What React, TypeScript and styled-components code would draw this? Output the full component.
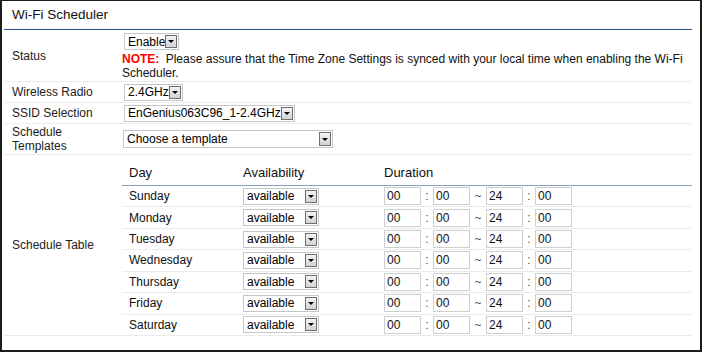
import React from "react";
import styled, { createGlobalStyle } from "styled-components";

const Global = createGlobalStyle`
  html, body { margin: 0; padding: 0; background: #fff; }
  body { font-family: "Liberation Sans", Arial, sans-serif; }
`;

const Frame = styled.div`
  width: 702px;
  height: 352px;
  box-sizing: border-box;
  border-style: solid;
  border-color: #1c1c1c;
  border-width: 1px 2px 2px 2px;
  padding: 0 8px 0 2px;
  background: #fff;
`;

const Title = styled.div`
  height: 28px;
  line-height: 28px;
  padding-left: 8px;
  font-size: 13.5px;
  color: #111;
  border-bottom: 1px solid #2b4a8b;
`;

const FormRow = styled.div<{ $h: number }>`
  display: grid;
  grid-template-columns: 118px 1fr;
  height: ${(p) => p.$h}px;
  border-bottom: 1px solid #ebebeb;
`;

const Label = styled.div`
  display: flex;
  align-items: center;
  padding: 0 8px;
  font-size: 12px;
  line-height: 14px;
  color: #222;
`;

const Value = styled.div<{ $top?: boolean }>`
  display: flex;
  flex-direction: column;
  justify-content: ${(p) => (p.$top ? "flex-start" : "center")};
  align-items: flex-start;
  padding-top: ${(p) => (p.$top ? 3 : 0)}px;
`;

const TableValue = styled.div`
  display: flex;
`;

const SelectBox = styled.div<{ $w?: number; $h?: number; $ml?: number }>`
  display: flex;
  align-items: center;
  width: ${(p) => (p.$w ? `${p.$w}px` : "auto")};
  height: ${(p) => p.$h ?? 17}px;
  margin-left: ${(p) => p.$ml ?? 2}px;
  box-sizing: border-box;
  border: 1px solid #c6c6c6;
  background: #fff;
  font-size: 12px;
  color: #000;
  padding-left: 3px;
`;

const SelectText = styled.span<{ $fill: boolean }>`
  flex: ${(p) => (p.$fill ? "1" : "none")};
  white-space: nowrap;
  overflow: hidden;
`;

const Arrow = styled.span`
  width: 12px;
  height: calc(100% - 2px);
  box-sizing: border-box;
  border: 1px solid #6e6e6e;
  background: linear-gradient(#f4f4f4, #d2d2d2);
  display: flex;
  align-items: center;
  justify-content: center;
  margin-right: 1px;
  &::after {
    content: "";
    border-left: 3px solid transparent;
    border-right: 3px solid transparent;
    border-top: 3px solid #000;
  }
`;

const Note = styled.div`
  font-size: 12px;
  line-height: 14px;
  color: #111;
  margin-top: 2px;
`;

const NoteTag = styled.b`
  color: #f00;
  margin-right: 3px;
`;

const Table = styled.div`
  display: flex;
  flex-direction: column;
  width: 100%;
  height: 180px;
`;

const HeaderRow = styled.div`
  display: grid;
  grid-template-columns: 114px 141px 1fr;
  height: 31px;
  flex: none;
  box-sizing: border-box;
  border-bottom: 1px solid #8c9dc8;
  font-size: 13px;
  color: #111;
`;

const HeadCell = styled.div`
  padding: 6px 0 0 7px;
  line-height: 24px;
`;

const DayRow = styled.div`
  display: grid;
  grid-template-columns: 114px 141px 1fr;
  flex: 1;
  border-bottom: 1px solid #ebebeb;
  &:last-child {
    border-bottom: none;
  }
`;

const Cell = styled.div`
  display: flex;
  align-items: center;
  padding-left: 7px;
  font-size: 12px;
  color: #111;
`;

const TimeBox = styled.input`
  width: 37px;
  height: 18px;
  box-sizing: border-box;
  border: 1px solid #cfcfcf;
  padding: 0 0 0 2px;
  margin: 0;
  font-family: "Liberation Sans", Arial, sans-serif;
  font-size: 12px;
  color: #111;
  background: #fff;
  outline: none;
`;

const Sep = styled.span<{ $w: number }>`
  width: ${(p) => p.$w}px;
  text-align: center;
  font-size: 12px;
  color: #555;
`;

function Select({ text, w, h, ml }: { text: string; w?: number; h?: number; ml?: number }) {
  return (
    <SelectBox $w={w} $h={h} $ml={ml}>
      <SelectText $fill={!!w}>{text}</SelectText>
      <Arrow />
    </SelectBox>
  );
}

const days = ["Sunday", "Monday", "Tuesday", "Wednesday", "Thursday", "Friday", "Saturday"];

export default function App() {
  return (
    <>
      <Global />
      <Frame>
        <Title>Wi-Fi Scheduler</Title>
        <FormRow $h={51}>
          <Label>Status</Label>
          <Value $top>
            <Select text="Enable" />
            <Note>
              <NoteTag>NOTE:</NoteTag> Please assure that the Time Zone Settings is synced with your local time when
              enabling the Wi-Fi Scheduler.
            </Note>
          </Value>
        </FormRow>
        <FormRow $h={20}>
          <Label>Wireless Radio</Label>
          <Value>
            <Select text="2.4GHz" />
          </Value>
        </FormRow>
        <FormRow $h={20}>
          <Label>SSID Selection</Label>
          <Value>
            <Select text="EnGenius063C96_1-2.4GHz" />
          </Value>
        </FormRow>
        <FormRow $h={30}>
          <Label>Schedule Templates</Label>
          <Value>
            <Select text="Choose a template" w={210} h={18} ml={1} />
          </Value>
        </FormRow>
        <FormRow $h={180}>
          <Label>Schedule Table</Label>
          <TableValue>
            <Table>
              <HeaderRow>
                <HeadCell>Day</HeadCell>
                <HeadCell>Availability</HeadCell>
                <HeadCell>Duration</HeadCell>
              </HeaderRow>
              {days.map((d) => (
                <DayRow key={d}>
                  <Cell>{d}</Cell>
                  <Cell>
                    <Select text="available" w={76} ml={0} />
                  </Cell>
                  <Cell>
                    <TimeBox readOnly defaultValue="00" />
                    <Sep $w={12}>:</Sep>
                    <TimeBox readOnly defaultValue="00" />
                    <Sep $w={16}>~</Sep>
                    <TimeBox readOnly defaultValue="24" />
                    <Sep $w={12}>:</Sep>
                    <TimeBox readOnly defaultValue="00" />
                  </Cell>
                </DayRow>
              ))}
            </Table>
          </TableValue>
        </FormRow>
      </Frame>
    </>
  );
}
